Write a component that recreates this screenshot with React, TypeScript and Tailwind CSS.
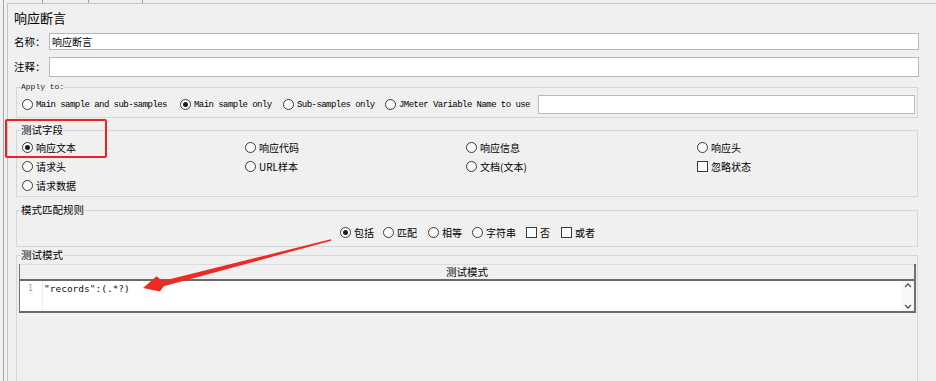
import React from "react";

const cjk = "font-['Microsoft_YaHei','Noto_Sans_CJK_SC',sans-serif]";
const mono = "font-['Liberation_Mono',monospace]";

const Radio = ({ checked }: { checked?: boolean }) => (
    <span className="flex h-[11px] w-[11px] shrink-0 items-center justify-center rounded-full border border-[#3a3a3a] bg-[#fbfbfb]">
        {checked && <span className="h-[5px] w-[5px] rounded-full bg-[#1e1e1e]" />}
    </span>
);

const Check = () => <span className="h-[11px] w-[11px] shrink-0 border border-[#3a3a3a] bg-[#fbfbfb]" />;

interface OptProps {
    label: string;
    checked?: boolean;
    box?: boolean;
    className?: string;
}

const Opt = ({ label, checked, box, className = "" }: OptProps) => (
    <div className={`flex items-center gap-[3px] ${className}`}>
        {box ? <Check /> : <Radio checked={checked} />}
        <span className="whitespace-nowrap leading-[14px]">{label}</span>
    </div>
);

const Group = ({ title, titleClass = "", className = "", children }: { title: string; titleClass?: string; className?: string; children: React.ReactNode }) => (
    <fieldset className={`ml-[2px] mr-[1px] border border-[#d6d6d6] p-0 ${className}`}>
        <legend className={`ml-[4px] px-0 ${titleClass}`}>{title}</legend>
        {children}
    </fieldset>
);

export default function App() {
    return (
        <div className={`relative h-[381px] w-[936px] overflow-hidden bg-[#f0f0f0] text-black ${cjk}`}>
            <div className="flex h-full">
                <div className="w-[3px]" />
                <div className="w-px bg-[#a8a8a8]" />
                <div className="w-[3px]" />
                <div className="flex flex-1 flex-col">
                    {/* tab ticks above the panel */}
                    <div className="flex h-[3px] shrink-0">
                        <div className="ml-[35px] w-px bg-[#9a9a9a]" />
                        <div className="ml-[45px] w-px bg-[#9a9a9a]" />
                        <div className="ml-[53px] w-px bg-[#9a9a9a]" />
                    </div>
                    <div className="flex-1 border-l border-t border-[#c6c6c6] pl-[6px] pr-[17px] text-[10px]">
                        <div className="mt-[6px] h-[16px] text-[13px] leading-[16px]">响应断言</div>

                        <div className="mt-[7px] flex h-[17px] items-center">
                            <span className="w-[35px] text-[10.5px]">名称：</span>
                            <div className="flex h-full flex-1 items-center border border-[#b8b8b8] bg-white pl-[2px]">响应断言</div>
                        </div>
                        <div className="mt-[7px] flex h-[20px] items-center">
                            <span className="w-[35px] text-[10.5px]">注释：</span>
                            <div className="h-full flex-1 border border-[#b8b8b8] bg-white" />
                        </div>

                        <Group title="Apply to:" titleClass={`${mono} text-[8px] leading-[12px] text-[#222]`} className="mt-[4px]">
                            <div className={`mt-[2px] flex h-[19px] items-center pl-[5px] pr-[2px] ${mono} text-[9px] tracking-[-0.55px]`}>
                                <Opt label="Main sample and sub-samples" className="w-[158px]" />
                                <Opt label="Main sample only" checked className="w-[103px]" />
                                <Opt label="Sub-samples only" className="w-[102px]" />
                                <Opt label="JMeter Variable Name to use" className="w-[153px]" />
                                <div className="h-[19px] flex-1 border border-[#b8b8b8] bg-white" />
                            </div>
                            <div className="h-[3px]" />
                        </Group>

                        <Group title="测试字段" titleClass="text-[10.5px] leading-[16px]" className="mt-[4px]">
                            <div className="grid grid-cols-[223px_221px_231px_1fr] pb-[1px] pl-[5px]">
                                <Opt label="响应文本" checked className="h-[19px]" />
                                <Opt label="响应代码" className="h-[19px]" />
                                <Opt label="响应信息" className="h-[19px]" />
                                <Opt label="响应头" className="h-[19px]" />
                                <Opt label="请求头" className="h-[19px]" />
                                <Opt label="URL样本" className="h-[19px]" />
                                <Opt label="文档(文本)" className="h-[19px]" />
                                <Opt label="忽略状态" box className="h-[19px]" />
                                <Opt label="请求数据" className="h-[19px]" />
                            </div>
                        </Group>

                        <Group title="模式匹配规则" titleClass="text-[10.5px] leading-[16px]" className="mt-[5px]">
                            <div className="mt-[5px] flex h-[19px] items-center pl-[323px]">
                                <Opt label="包括" checked className="w-[43px]" />
                                <Opt label="匹配" className="w-[45px]" />
                                <Opt label="相等" className="w-[44px]" />
                                <Opt label="字符串" className="w-[54px]" />
                                <Opt label="否" box className="w-[35px]" />
                                <Opt label="或者" box />
                            </div>
                            <div className="h-[4px]" />
                        </Group>

                        <Group title="测试模式" titleClass="text-[10.5px] leading-[16px]">
                            <div className="pl-[2px] pr-[1px] pt-[1px]">
                                <div className="border-l border-r-2 border-[#707070]">
                                    <div className="flex h-[17px] items-center justify-center border-b-2 border-t border-b-[#6a6a6a] border-t-[#dcdcdc] text-[10.5px]">
                                        测试模式
                                    </div>
                                    <div className="flex h-[32px] border-b-2 border-[#6a6a6a] bg-white">
                                        <div className="w-[23px] border-r border-[#ececec] pl-[8px] pt-[1px] font-['DejaVu_Sans_Mono',monospace] text-[8px] leading-[14px] text-[#9a9a9a]">
                                            1
                                        </div>
                                        <div className="flex-1 pl-[1px] pt-[1px] font-['DejaVu_Sans_Mono',monospace] text-[9.5px] leading-[14px] text-[#111]">
                                            "records":(.*?)
                                        </div>
                                        <div className="flex w-[13px] flex-col items-center justify-between bg-[#f7f7f7] py-[1px]">
                                            <svg width="8" height="6" viewBox="0 0 8 6"><path d="M1 5 L4 2 L7 5" fill="none" stroke="#555" strokeWidth="1.3" /></svg>
                                            <svg width="8" height="6" viewBox="0 0 8 6"><path d="M1 1 L4 4 L7 1" fill="none" stroke="#555" strokeWidth="1.3" /></svg>
                                        </div>
                                    </div>
                                </div>
                            </div>
                            <div className="h-[200px]" />
                        </Group>
                    </div>
                </div>
            </div>

            {/* annotations */}
            <div className="absolute left-[5px] top-[119px] h-[39px] w-[102px] rounded-[2px] border-2 border-[#ee2222]" />
            <svg className="absolute left-0 top-0" width="936" height="381" viewBox="0 0 936 381">
                <polygon
                    points="331.2,240.7 330.8,239.3 162.5,281 156.5,276.3 143,288 160,291.5 163.7,286.2"
                    fill="#ee2a22"
                />
            </svg>
        </div>
    );
}
